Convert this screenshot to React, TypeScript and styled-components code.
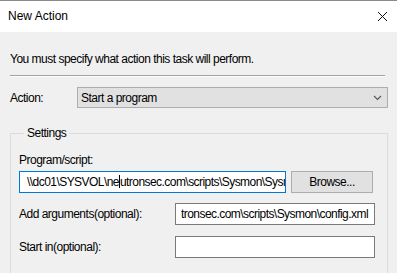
import React from "react";
import styled, { createGlobalStyle } from "styled-components";

const GlobalStyle = createGlobalStyle`
  html, body {
    margin: 0;
    padding: 0;
    background: #f0f0f0;
  }
  body {
    font-family: "Liberation Sans", Arial, sans-serif;
    font-size: 12px;
    letter-spacing: -0.5px;
    color: #000;
  }
`;

const Window = styled.div`
  width: 397px;
  height: 273px;
  overflow: hidden;
  display: flex;
  flex-direction: column;
  background: #f0f0f0;
`;

const TitleBar = styled.div`
  height: 31px;
  border-top: 1px solid #8a8a8a;
  background: #fff;
  display: flex;
  align-items: center;
  justify-content: space-between;
  padding: 0 9px 0 8px;
`;

const Title = styled.span`
  font-size: 12px;
  letter-spacing: 0;
  line-height: 16px;
  margin-top: -1px;
`;

const CloseIcon = () => (
  <svg width="11" height="11" viewBox="0 0 11 11">
    <path d="M1 1 L10 10 M10 1 L1 10" stroke="#111" strokeWidth="1" fill="none" />
  </svg>
);

const Body = styled.div`
  flex: 1;
  display: flex;
  flex-direction: column;
  padding: 0 9px 0 10px;
`;

const Intro = styled.p`
  margin: 19px 0 0;
  line-height: 16px;
`;

const Separator = styled.div`
  margin: 8px 3px 0 0;
  border-top: 1px solid #a0a0a0;
  border-bottom: 1px solid #fff;
`;

const Row = styled.div<{ $top?: number }>`
  display: flex;
  align-items: center;
  margin-top: ${(p) => p.$top ?? 0}px;
`;

const Label = styled.label<{ $width?: number }>`
  width: ${(p) => (p.$width ? `${p.$width}px` : "auto")};
  flex-shrink: 0;
  line-height: 16px;
`;

const Combo = styled.div`
  flex: 1;
  height: 19px;
  border: 1px solid #adadad;
  background: #e1e1e1;
  display: flex;
  align-items: center;
  justify-content: space-between;
  padding: 0 5px 0 3px;
`;

const Chevron = () => (
  <svg width="9" height="6" viewBox="0 0 9 6">
    <path d="M1 1 L4.5 4.5 L8 1" stroke="#555" strokeWidth="1.1" fill="none" />
  </svg>
);

const Group = styled.fieldset`
  margin: 17px 0 0;
  padding: 0 14px 0 8px;
  border: 1px solid #dcdcdc;
  border-bottom: none;
  flex: 1;
  min-width: 0;
`;

const Legend = styled.legend`
  margin-left: 5px;
  padding: 0 3px 0 3px;
  line-height: 16px;
`;

const FieldLabel = styled.div`
  margin-top: 11px;
  line-height: 16px;
`;

const TextBox = styled.div<{ $focused?: boolean; $alignEnd?: boolean }>`
  height: 20px;
  border: 1px solid ${(p) => (p.$focused ? "#0078d7" : "#7a7a7a")};
  background: #fff;
  display: flex;
  align-items: center;
  justify-content: ${(p) => (p.$alignEnd ? "flex-end" : "flex-start")};
  overflow: hidden;
  white-space: nowrap;
  padding: 0 6px 0 7px;
`;

const ProgramBox = styled(TextBox)`
  width: 252px;
  flex-shrink: 0;
`;

const FieldBox = styled(TextBox)`
  width: 185px;
  flex-shrink: 0;
`;

const Value = styled.span`
  flex-shrink: 0;
  line-height: 16px;
  letter-spacing: -0.55px;
`;

const Caret = styled.span`
  display: inline-block;
  width: 0;
  height: 13px;
  border-left: 1px solid #000;
  vertical-align: -2px;
`;

const Button = styled.button`
  margin-left: 5px;
  width: 83px;
  height: 22px;
  border: 1px solid #adadad;
  background: #e1e1e1;
  font: inherit;
  letter-spacing: inherit;
  color: #000;
  padding: 0;
`;

export default function App() {
  return (
    <>
      <GlobalStyle />
      <Window>
        <TitleBar>
          <Title>New Action</Title>
          <CloseIcon />
        </TitleBar>
        <Body>
          <Intro>You must specify what action this task will perform.</Intro>
          <Separator />
          <Row $top={10}>
            <Label $width={67}>Action:</Label>
            <Combo>
              <span>Start a program</span>
              <Chevron />
            </Combo>
          </Row>
          <Group>
            <Legend>Settings</Legend>
            <FieldLabel>Program/script:</FieldLabel>
            <Row $top={3}>
              <ProgramBox $focused>
                <Value>
                  \\dc01\SYSVOL\ne
                  <Caret />
                  utronsec.com\scripts\Sysmon\Sysm
                </Value>
              </ProgramBox>
              <Button>Browse...</Button>
            </Row>
            <Row $top={10}>
              <Label $width={156}>Add arguments(optional):</Label>
              <FieldBox $alignEnd>
                <Value>tronsec.com\scripts\Sysmon\config.xml</Value>
              </FieldBox>
            </Row>
            <Row $top={11}>
              <Label $width={156}>Start in(optional):</Label>
              <FieldBox />
            </Row>
          </Group>
        </Body>
      </Window>
    </>
  );
}
